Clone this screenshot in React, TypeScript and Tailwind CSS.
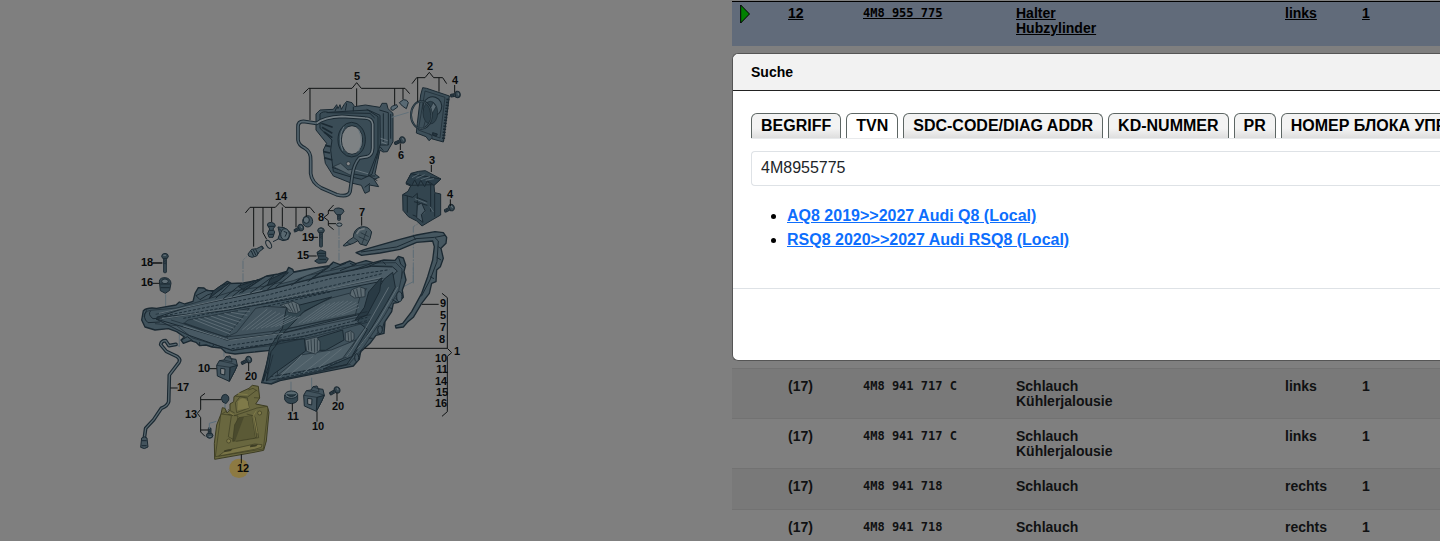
import React from "react";

const tabs = ["BEGRIFF", "TVN", "SDC-CODE/DIAG ADDR", "KD-NUMMER", "PR", "НОМЕР БЛОКА УПРАВЛЕНИЯ"];

type Part = { pos: string; code: string; name: string[]; side: string; qty: string };

const selected: Part = { pos: "12", code: "4M8 955 775", name: ["Halter", "Hubzylinder"], side: "links", qty: "1" };

const parts: Part[] = [
  { pos: "(17)", code: "4M8 941 717 C", name: ["Schlauch", "Kühlerjalousie"], side: "links", qty: "1" },
  { pos: "(17)", code: "4M8 941 717 C", name: ["Schlauch", "Kühlerjalousie"], side: "links", qty: "1" },
  { pos: "(17)", code: "4M8 941 718", name: ["Schlauch"], side: "rechts", qty: "1" },
  { pos: "(17)", code: "4M8 941 718", name: ["Schlauch"], side: "rechts", qty: "1" },
];

const callouts: [string, number, number][] = [
  ["5", 357, 80], ["2", 430, 70], ["4", 455, 84], ["6", 401, 159], ["3", 432, 164], ["4", 450, 198],
  ["14", 281, 200], ["8", 321, 221], ["7", 362, 216], ["19", 308, 241], ["15", 303, 259], ["18", 147, 266],
  ["16", 147, 286], ["9", 443, 307], ["5", 443, 319], ["7", 443, 331], ["8", 442, 343], ["1", 457, 355],
  ["10", 441, 362], ["11", 442, 373], ["14", 441, 385], ["15", 442, 396], ["16", 441, 407], ["10", 204, 372],
  ["20", 251, 380], ["17", 183, 391], ["13", 191, 418], ["11", 293, 420], ["10", 318, 430], ["20", 338, 410],
  ["12", 243, 472],
];

function Screw({ x, y, angle = 0, length = 22 }: { x: number; y: number; angle?: number; length?: number }) {
  return (
    <g transform={`translate(${x} ${y}) rotate(${angle})`}>
      <rect x="-4" y="0" width="8" height={length} rx="2" fill="#485861" />
      <path d={`M-4 8l8 3M-4 13l8 3M-4 18l8 3M0 2v${length - 4}`} strokeWidth="2" />
      <path d="M-10-2Q-10-10 0-11Q10-10 10-2L7 4H-7Z" fill="#36464f" />
      <path d="M-5-5H3" stroke="#66747b" strokeWidth="3" />
    </g>
  );
}

function Bracket({ x, y }: { x: number; y: number }) {
  return (
    <g transform={`translate(${x} ${y})`}>
      <path d="M0 28L8 14L22 12L28 2L40 0L44 8L58 10L62 28L54 46L38 76L2 60Z" fill="#42535d" />
      <path d="M40 34L62 28L54 46L38 76Z" fill="#30424c" />
      <path d="M0 28L40 34L38 76M8 14L45 22L62 28M22 12L46 18L44 8M28 2L48 10" fill="none" strokeWidth="2" />
      <path d="M12 37L25 39L24 57L12 54Z" fill="#808487" />
    </g>
  );
}

function HousingGroup() {
  return (
    <g transform="translate(120 50) scale(.33333)" stroke="#1b2932" strokeWidth="3" strokeLinejoin="round">
      <path d="M588 192L600 180L640 178L650 164L654 176L660 164L664 178L672 164L680 154L696 158L704 170L736 165L780 172L786 160L800 160L804 176L819 190V275L802 305L789 306L780 300L765 372L778 382L762 388L776 410L748 405V424L735 430L724 406L690 398L640 378L616 340L610 300L620 280L588 240Z" fill="#42535d" />
      <path d="M600 192Q608 182 625 187L745 180L780 196L781 282L756 373L724 388L690 380L640 365L632 300L636 270L600 235Z" fill="#3a4c56" />
      <path d="M778 180L805 188V285L780 285M790 190V275M812 192V266M740 178L774 200V326M636 352L690 370L744 380L775 300M620 188L750 190L764 204M650 172L645 184M680 160L676 182M700 170V184M780 290L790 302M766 378H748L772 392M734 412L750 400" fill="none" strokeWidth="3" />
      <path d="M604 220L638 232M606 232L637 250M612 246L637 263M615 286L632 290M611 305L630 309M612 323L637 330" fill="none" strokeWidth="5" />
      <path d="M640 350L662 340L684 360L706 356L696 378Z" fill="#56656d" strokeWidth="2" />
      <path d="M705 360L744 371M782 265L803 272M784 276L800 282" fill="none" stroke="#66747c" />
      <ellipse cx="695" cy="269" rx="41" ry="52" fill="#334650" />
      <ellipse cx="696" cy="270" rx="32" ry="43" fill="#7e8284" />
      <path d="M672 230Q652 262 668 302M716 240Q733 276 715 304" fill="none" stroke="#66747c" strokeWidth="3" />
      <circle cx="685" cy="341" r="6" fill="#87898a" strokeWidth="2" />
      <path d="M590 220L550 214Q534 214 534 230V270Q536 286 554 294Q574 306 572 332V370Q575 398 604 414L650 434Q684 443 690 425L697 376Q702 342 718 324L742 320Q757 316 758 294V222Q756 205 735 204L666 199Q610 202 590 220Z" fill="none" strokeWidth="11" />
      <path d="M590 220L550 214Q534 214 534 230V270Q536 286 554 294Q574 306 572 332V370Q575 398 604 414L650 434Q684 443 690 425L697 376Q702 342 718 324" fill="none" stroke="#55656e" strokeWidth="5" />
      <path d="M718 324L742 320Q757 316 758 294V222Q756 205 735 204L666 199Q610 202 590 220" fill="none" stroke="#717c82" strokeWidth="5" />
      <path d="M815 202L866 187" stroke="#62717a" strokeWidth="3" />
      <path d="M813 179Q810 171 818 168L830 164L833 171L819 181ZM838 158L850 149Q862 148 865 158L859 176L847 168Z" fill="#596a74" />
      <path d="M908 113L920 115L988 138L970 276L934 266L927 272L918 260L889 249L892 220L902 135Z" fill="#3d4f59" />
      <path d="M915 123L975 142L960 264L895 240ZM918 205L910 235M930 160L960 150M928 252L936 258M936 267V258" fill="none" strokeWidth="2" />
      <path d="M984 146L970 272" strokeWidth="9" strokeDasharray="5 4" fill="none" />
      <ellipse cx="937" cy="170" rx="28" ry="30" fill="#485a64" transform="rotate(18 937 170)" />
      <ellipse cx="931" cy="188" rx="22" ry="34" fill="#2e404a" strokeWidth="2" />
      <path d="M928 180L940 158L948 170L934 195Z" fill="#5b6b74" strokeWidth="2" />
      <ellipse cx="904" cy="195" rx="31" ry="41" fill="none" strokeWidth="6" />
      <ellipse cx="904" cy="195" rx="31" ry="41" fill="none" stroke="#4f606a" strokeWidth="2" />
      <path d="M938 248L952 252L949 259L938 255Z" fill="#25353f" />
      <Screw x={1010} y={134} angle={80} length={18} />
      <Screw x={845} y={271} angle={65} length={23} />
      <path d="M848 434L864 424L872 408L858 402L873 370L896 364L916 362L963 387L942 406L944 428L962 432V495L936 510L906 528L890 513L865 500L849 481Z" fill="#33454f" />
      <path d="M872 406L945 404M848 434L878 442L892 430V503M862 438V488M918 392L932 402V485M944 430V500M890 442L922 455M882 455L922 466M878 495L891 500" fill="none" />
      <path d="M858 398L873 371L903 377L963 387L942 406L922 392L914 410L902 391L894 409L884 390L875 407Z" fill="#2b3d48" />
      <path d="M876 383L897 372M889 385L914 374M902 389L930 380M917 391L942 386M885 446L920 460M898 470L907 468L912 490M930 470L940 486" fill="none" stroke="#56666f" strokeWidth="3" />
      <path d="M892 466L905 459L915 482L904 494L909 517L890 503Z" fill="#4c5d67" />
      <Screw x={992} y={474} angle={62} length={20} />
      <Screw x={657} y={486} length={25} />
      <path d="M641 482Q642 474 657 474Q672 476 672 484L664 494H650Z" fill="#42535d" />
      <ellipse cx="658" cy="524" rx="8" ry="5" fill="#737e84" />
      <path d="M669 587L688 570L700 562Q700 538 722 531Q744 526 755 546Q753 566 739 587L720 582L714 572L700 580L676 588Z" fill="#485860" />
      <path d="M704 552Q712 535 724 534M700 562L714 572M722 548L746 560M716 560L742 572M740 543L725 584M681 577L693 584" fill="none" strokeWidth="2" />
      <path d="M710 552L718 540L734 536" fill="none" stroke="#70797e" strokeWidth="5" />
      <Screw x={603} y={544} length={47} />
      <path d="M591 607L602 600L617 605V620L625 626L618 638L595 640L584 633L596 625Z" fill="#33454f" />
      <path d="M591 610H617M595 618H614M598 628H618" strokeWidth="3" />
      <path d="M384 612L395 598L410 596L426 588L431 595L418 605L410 618L396 622Q383 620 384 612Z" fill="#4a5b64" />
      <path d="M394 603L401 619M400 600L408 616M407 598L414 612M425 590L429 597" />
      <ellipse cx="446" cy="583" rx="7" ry="13" fill="none" transform="rotate(-28 446 583)" />
      <path d="M442 525Q442 517 454 517Q466 519 466 528L459 537L464 546L459 562H447L443 550L449 537Z" fill="#3d4f59" />
      <path d="M444 529H464M448 541H460M447 553H461" />
      <path d="M474 531L493 533L501 539L512 549L505 568L489 572L474 566L479 552Z" fill="#42535d" />
      <ellipse cx="495" cy="553" rx="13" ry="17" fill="#586870" />
      <path d="M491 544L501 548L495 560M477 536L485 543M459 575L475 567" fill="none" />
      <Screw x={540} y={534} angle={62} length={18} />
      <ellipse cx="563" cy="514" rx="15" ry="17" fill="#42535d" />
      <ellipse cx="559" cy="510" rx="9" ry="10" fill="#5f6e76" />
      <Screw x={135} y={621} length={47} />
      <g fill="none" stroke="#101314" strokeWidth="3">
        <path d="M550 131L566 115H696L710 98L724 115H855L869 131M570 115V210M710 115V168M824 115V165M849 115V148" />
        <path d="M876 101L890 83H915L928 67L941 83H968L980 101M893 83V155M957 83V125M1004 105V128M841 280V300M934 345V366M991 448V468M725 500V527" />
        <path d="M376 489L390 472H466L480 457L495 472H570L584 489M401 472V590M429 472V548L440 568M455 472V516M487 472V530M528 472V532M559 472V500" />
        <path d="M641 465L625 482V492L612 502L625 512V526L641 539M625 482H640M625 521H648M578 562H594M566 618H590M98 639H127" />
      </g>
      <path d="M657 532V632M369 695V630L380 620M880 700V530L893 522" fill="none" stroke="#5d6c75" strokeWidth="3" strokeDasharray="25 4 5 4" />
    </g>
  );
}

function HeadlampGroup() {
  return (
    <g transform="translate(120 240) scale(.33333)" stroke="#1b2932" strokeWidth="3" strokeLinejoin="round">
      <path d="M137 163V200M312 326V350M513 425V455M575 413V445M178 283V320L166 310M880 82V125L847 142" fill="none" stroke="#5d6c75" strokeWidth="3" />
      <path d="M708 38L735 28L840-2L890-15L945-25L970-22L980-8L978 10L963 25L970 55L961 80L950 90L948 125L935 130L928 160L905 190L880 232L862 247L850 261L828 264L826 257L848 250L875 215L905 160L923 110L938 60L943 20L938 3L890 7L840 28L780 39L725 46Z" fill="#465760" strokeWidth="4" />
      <path d="M723 36L830 21L888-4L944-8L955 3L951 65L930 120L904 169M945-8L975-14M955 20L964 27M950 52L963 60M930 110L942 116M880-12L887-1" fill="none" />
      <path d="M70 212Q82 201 110 205L168 195L178 186L194 192L219 184L225 160L235 143L252 144L262 152L285 151L322 124L334 130L370 129L410 122L440 108L475 102L500 94L506 82L518 88L521 96L575 85L628 77L640 66L660 74L690 63L707 71L738 62L760 68L792 60L825 61L835 49L850 54L857 75L852 95L858 120L847 150L850 172L835 187L820 190L815 215L795 245L792 280L768 286L750 310L722 335L718 357L700 378L665 385L590 400L480 422L455 432L425 428L451 331L345 342L318 338L303 324L276 321L258 315L239 317L228 307L212 302L190 310L183 300L193 291L170 275L145 266L105 270L75 261L65 240Z" fill="#40525c" strokeWidth="4" />
      <path d="M110 232L215 198L430 154L595 112L755 79L818 81L832 93L805 120L647 151L430 192L310 213Z" fill="#4b5c66" />
      <path d="M108 237L325 300L480 281L613 248L724 222L756 234L722 249L469 309L337 332L204 285Z" fill="#485963" />
      <path d="M204 240L388 205L352 251L317 292L193 249Z" fill="#394b55" strokeWidth="2" />
      <path d="M320 291L350 277L407 205L435 199L500 203L545 222L485 264L453 283L325 299Z" fill="#42535d" strokeWidth="2" />
      <path d="M545 220L598 190L635 174L740 146L720 170L706 225L500 266L486 280L491 266Z" fill="#465760" strokeWidth="2" />
      <path d="M477 300L560 287L670 258L723 250L735 263L708 300L682 350L622 375L472 407Z" fill="#40525c" strokeWidth="2" />
      <path d="M499 205L635 171L552 214L504 265L477 292L463 330L430 424L449 323L467 295L487 266Z" fill="#33464f" />
      <path d="M453 335L478 303L553 296L557 333L462 401L439 423Z" fill="#30434d" />
      <path d="M593 293L668 270L672 300L617 331L588 331Z" fill="#33464f" />
      <path d="M792 118L818 97L826 142L799 190L738 292L680 374L610 387L695 350L742 268L713 245Z" fill="#33454f" />
      <path d="M704 242L733 202L746 156L785 111L779 154L742 224Z" fill="#293a44" />
      <path d="M472 407L548 344L634 330L708 300L668 355L598 384Z" fill="#4e5f68" strokeWidth="2" />
      <path d="M480 196L519 184L536 192L542 212L530 220L505 217L500 203ZM694 150L717 140L735 146L735 170L704 174L690 165ZM555 300L590 291L600 305L600 330L586 342L560 334ZM676 278L692 272L702 280L702 298L690 306L676 302Z" fill="#5c6a71" strokeWidth="2" />
      <path d="M492 196L513 214M504 189L519 216M515 187L526 217M528 191L534 216M700 150L708 172M710 146L715 172M722 145L724 170M564 303L566 331M573 298L575 334M583 296L584 338M592 298L592 334M684 277L686 302M693 275L694 303" fill="none" strokeWidth="2" />
      <path d="M72 231Q73 214 91 211L171 204L230 187L342 153L438 138L555 108L672 83L760 69L827 68L846 87L845 116M107 223L209 201L439 151L612 106L758 77L817 79M114 239L283 213L455 180L640 144L790 115M105 251L170 257L218 294L337 330L452 317L595 286L745 246M153 240L319 291L484 271L612 242L742 215M189 249L321 301L490 279L752 224M440 421L514 412L627 387L688 371L731 321L795 224L836 152L848 94M454 430L477 419L585 398L692 373M449 340L430 422M459 344L440 419" fill="none" strokeWidth="2" />
      <path d="M118 237L438 181L646 135L785 101M136 227L443 165L635 115L808 89M324 317L484 293L619 264L742 232M335 326L451 312L610 276L752 239M190 235L420 192L622 152M430 201L634 155M451 410L540 397L659 366M458 419L615 387" fill="none" stroke="#1d2d37" strokeDasharray="9 5" />
      <path d="M117 220L201 201L427 151M119 237L334 205L609 150L785 112M190 258L329 301L490 280M478 412L546 345M510 403L579 349M551 398L630 336M596 383L665 326M806 142L737 265L680 351M833 141L774 245L712 328" fill="none" stroke="#5f6e76" />
      <path d="M220 238L330 282M235 235L335 273M253 232L342 265M272 228L350 256M293 225L361 247M313 220L370 238M333 217L382 226M354 213L390 214" fill="none" stroke="#5c6b74" strokeWidth="3" />
      <path d="M367 270L442 207M380 270L455 211M394 269L468 215M408 268L480 219M423 265L493 223M437 263L505 226M452 262L515 229M466 260L527 230M480 258L540 230M536 250L615 193M549 249L630 190M562 246L645 187M576 243L658 185M590 240L671 183M604 237L684 183M619 234L697 184M634 231L709 187M650 227L716 192M665 224L717 202" fill="none" stroke="#5c6b74" strokeWidth="3" />
      <path d="M80 211Q65 233 84 248L120 246M92 212Q82 224 99 236L126 234M228 167L262 150L285 157L262 165L240 179ZM279 162L308 145M287 175L332 131L366 130L310 176M337 169L395 124L420 119L358 160M365 158L437 109L462 107L390 160M421 149L487 102L505 98L442 148M466 142L523 97L577 86L514 137M527 126L597 84L628 81L563 125M575 115L639 70M632 88L678 70M660 92L710 72M700 90L756 70M743 80L783 64" fill="none" />
      <path d="M280 153L302 137L330 128L298 151L268 175ZM354 139L414 119L369 148ZM450 118L500 95L478 121L442 137Z" fill="#293a44" />
      <path d="M521 98L575 87L628 80L590 96L520 122L480 132Z" fill="#4f6069" strokeWidth="2" />
      <path d="M838 158Q850 158 844 175L835 184L827 174M793 246L784 277L770 280M723 337L711 352L719 357M690 70L704 76M788 64L797 74M836 53L842 72L853 83M185 300L202 290L218 302M805 202L817 206M817 179L831 187M758 295L746 294M239 317V306M276 321L284 312" fill="none" />
      <ellipse cx="838" cy="170" rx="8" ry="15" fill="#4c5d67" />
      <ellipse cx="780" cy="269" rx="7" ry="12" fill="#42535d" />
      <ellipse cx="710" cy="353" rx="6" ry="12" fill="#42535d" />
      <path d="M118 123Q120 112 137 113Q152 116 153 130L149 151L136 160L121 152Z" fill="#33454f" />
      <path d="M121 132H150M122 143H149M126 121L142 127" fill="none" />
      <ellipse cx="135" cy="124" rx="10" ry="7" fill="#5f6e76" />
      <path d="M168 313L147 317L137 302Q124 302 122 314L139 334L172 350Q183 358 177 367L148 405L146 485Q143 498 124 505L101 539L77 565L73 594" fill="none" strokeWidth="11" strokeLinecap="round" />
      <path d="M168 313L147 317L137 302Q124 302 122 314L139 334L172 350Q183 358 177 367L148 405L146 485Q143 498 124 505L101 539L77 565L73 594" fill="none" stroke="#59686f" strokeWidth="4" strokeLinecap="round" />
      <path d="M65 594Q73 587 81 594L84 621Q73 630 62 622Z" fill="#44545d" />
      <path d="M66 602H80M65 617H80" />
      <Bracket x={290} y={348} />
      <Bracket x={551} y={438} />
      <Screw x={384} y={360} angle={62} length={22} />
      <Screw x={649} y={451} angle={60} length={22} />
      <path d="M494 465V479Q499 491 514 491Q531 489 533 479V465" fill="#33454f" />
      <ellipse cx="514" cy="464" rx="19" ry="11" fill="#586870" />
      <path d="M500 463Q514 476 528 463" fill="#273841" />
      <path d="M304 475Q306 463 316 463Q329 466 326 481L318 491L308 486Z" fill="#33454f" />
      <Screw x={269} y={584} angle={180} length={20} />
      <path d="M315 491V510M289 544L268 550V567" fill="none" stroke="#586b78" strokeWidth="3" />
      <g stroke="#3c3c22">
        <path d="M342 470L363 456L387 445L397 436L415 439L419 474L407 492L442 499L447 517L439 603L431 631L402 637L284 658L283 610L290 555L303 522L307 503L315 505L321 519L330 509V492L341 485Z" fill="#69673f" />
        <path d="M303 522L343 527L411 504L442 499M302 526L286 650L430 627L444 506M323 523L354 528L341 600L410 592L403 528L380 522M334 528L325 590L350 604L416 593L405 531M346 469L383 471L409 451M346 488L360 470L382 474L387 504L350 518ZM385 450L399 445L412 453M402 473L418 474M324 508L344 519M307 521L322 512" fill="none" strokeWidth="2" />
        <path d="M357 533L395 527L405 593L338 604L344 554Z" fill="#4a4a2d" strokeWidth="2" />
        <path d="M372 530L395 527L405 593L345 603Z" fill="#5b5a36" stroke="none" />
        <path d="M354 484Q368 466 383 484L387 504L352 511Z" fill="#7f7a49" stroke="none" />
        <path d="M296 648L316 632L404 612L426 614L424 622L404 628Z" fill="#7a7547" strokeWidth="2" />
        <path d="M330 518L342 526M409 512L401 525L412 580M354 461L383 464" fill="none" stroke="#7f7a49" />
        <circle cx="419" cy="519" r="6" fill="#7f7a49" strokeWidth="2" />
        <circle cx="326" cy="603" r="6" fill="#7f7a49" strokeWidth="2" />
        <path d="M313 631L337 626L333 633L312 637ZM391 616L414 612L409 619L390 622Z" fill="#3d3d25" stroke="none" />
      </g>
      <circle cx="357" cy="685" r="29" fill="#8d7a42" stroke="none" />
      <g fill="none" stroke="#101314" strokeWidth="3">
        <path d="M966 160L982 173V325L995 338L982 349V515L966 529M733 325H982M906 193H956M98 130H118M98 69H127M268 386H290M386 367V393M151 444H173M517 490V514M591 514V545M651 458V483M364 643V670" />
        <path d="M255 460L242 470V508L232 520L242 533V576L255 589M242 479H304M242 570H264" />
      </g>
    </g>
  );
}

function PartsDrawing() {
  return (
    <svg viewBox="120 50 360 430" width="360" height="430" role="img" aria-label="Headlamp parts" className="block">
      <HousingGroup />
      <HeadlampGroup />
      <g className="font-['Liberation_Sans',sans-serif] text-[11px] font-bold" fill="#080a0b" textAnchor="middle">
        {callouts.map(([label, x, y], i) => (
          <text key={i} x={x} y={y}>{label}</text>
        ))}
      </g>
    </svg>
  );
}

function Columns() {
  return (
    <colgroup>
      <col className="w-14" />
      <col className="w-[75px]" />
      <col className="w-[153px]" />
      <col className="w-[269px]" />
      <col className="w-[77px]" />
      <col />
    </colgroup>
  );
}

function PartCells({ part }: { part: Part }) {
  return (
    <>
      <td>{part.pos}</td>
      <td className="font-['DejaVu_Sans_Mono',monospace] text-xs leading-[15px]">{part.code}</td>
      <td>
        {part.name.map((line) => (
          <div key={line}>{line}</div>
        ))}
      </td>
      <td>{part.side}</td>
      <td>{part.qty}</td>
    </>
  );
}

function SearchDialog() {
  return (
    <section role="dialog" aria-labelledby="search-title" className="my-[7px] rounded-l-md border border-r-0 border-[#555] bg-white text-black">
      <header className="rounded-tl-md border-b border-[#222] bg-[#f2f2f2] px-[18px] py-2">
        <h2 id="search-title" className="text-sm font-bold">Suche</h2>
      </header>
      <div className="overflow-hidden pt-[22px] pl-[18px]">
        <div role="tablist" className="flex gap-[5px] border-b border-[#e8eaec]">
          {tabs.map((tab) => (
            <button
              key={tab}
              type="button"
              role="tab"
              aria-selected={tab === "TVN"}
              className={
                "h-[25px] shrink-0 rounded-t-md border border-b-0 border-[#5d6664] px-[9px] text-base leading-6 font-bold whitespace-nowrap " +
                (tab === "TVN" ? "bg-white" : "bg-linear-to-b from-[#f3f3f3] from-60% to-[#dedede]")
              }
            >
              {tab}
            </button>
          ))}
        </div>
        <input
          aria-label="TVN"
          defaultValue="4M8955775"
          className="mt-3 block h-[35px] w-full rounded-l border border-r-0 border-[#dee2e6] bg-white px-[9px] text-base font-normal text-[#212529] outline-none"
        />
        <ul className="mt-[18px] mb-9 list-disc pl-9 text-base leading-6">
          <li><a href="#q8" className="font-bold text-[#0d6efd] underline">AQ8 2019&gt;&gt;2027 Audi Q8 (Local)</a></li>
          <li><a href="#rsq8" className="font-bold text-[#0d6efd] underline">RSQ8 2020&gt;&gt;2027 Audi RSQ8 (Local)</a></li>
        </ul>
      </div>
      <footer className="h-[72px] border-t border-[#dee2e6]" />
    </section>
  );
}

export default function App() {
  return (
    <div className="grid h-screen grid-cols-[61fr_59fr] overflow-hidden bg-[#7f7f7f] font-['Liberation_Sans',Arial,sans-serif]">
      <main className="pt-[50px] pl-[120px]">
        <PartsDrawing />
      </main>
      <aside className="min-w-0 pt-px text-sm leading-[15px] font-bold text-[#101112]">
        <table className="w-full table-fixed border-t border-black">
          <Columns />
          <tbody>
            <tr className="h-11 bg-[#616b7a] align-top text-black underline [&>td]:pt-1">
              <td className="pt-0.5!">
                <svg viewBox="0 0 10 20" width="10" height="20" className="ml-2 block" aria-hidden="true">
                  <path d="M.7 1L9.5 10L.7 19Z" fill="#008000" stroke="#000" />
                </svg>
              </td>
              <PartCells part={selected} />
            </tr>
          </tbody>
        </table>
        <SearchDialog />
        <table className="w-full table-fixed border-collapse">
          <Columns />
          <tbody>
            {parts.map((part, i) => (
              <tr
                key={i}
                className={
                  "h-[41px] border-t border-[#727272] align-top [&>td]:pt-[10px] [&>td]:pb-[9px] " +
                  (i % 2 === 0 ? "bg-[#797979]" : "bg-[#7f7f7f]")
                }
              >
                <td />
                <PartCells part={part} />
              </tr>
            ))}
          </tbody>
        </table>
      </aside>
    </div>
  );
}
